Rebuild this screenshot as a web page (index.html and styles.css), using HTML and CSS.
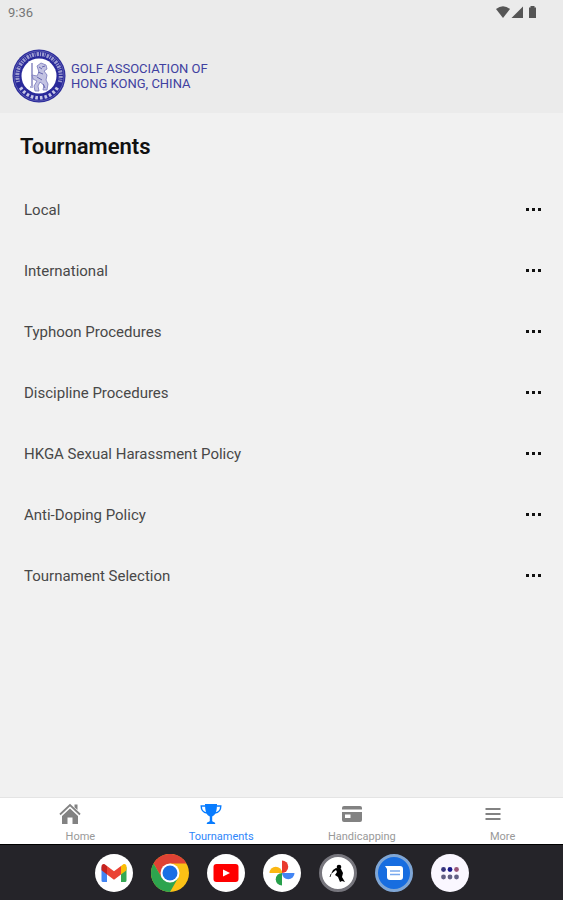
FILE: index.html
```html
<!DOCTYPE html>
<html lang="en">
<head>
<meta charset="utf-8">
<meta name="viewport" content="width=device-width, initial-scale=1">
<title>Tournaments</title>
<link rel="stylesheet" href="styles.css">
</head>
<body>
<header class="top">
  <div class="status">
    <time>9:36</time>
    <svg width="44" height="14" viewBox="0 0 44 14" fill="#555" aria-hidden="true">
      <path d="M1 4Q8-1.500 15 4L8 13Z"/>
      <path d="M28 1.500V13H16.500Z"/>
      <path d="M34 2.500h1.500V1h4v1.500H41V13h-7Z"/>
    </svg>
  </div>
  <div class="brand">
    <svg width="54" height="54" viewBox="0 0 54 54" fill="none" aria-hidden="true">
      <circle cx="27" cy="27" r="26.500" fill="#29299a"/>
      <circle cx="27" cy="27" r="25" stroke="#7777bd" stroke-width=".6"/>
      <path d="M6.200 33A21.700 21.700 0 1 1 47.800 33" stroke="#9c9cd0" stroke-width="4" stroke-dasharray="1.200 1 2 .8 .8 1.200 2.300 1"/>
      <path d="M8.500 38.500A21.700 21.700 0 0 0 45.500 38.500" stroke="#c5c5e6" stroke-width="3.500" stroke-dasharray="2.600 2"/>
      <circle cx="27" cy="27" r="17.500" fill="#fff"/>
      <path d="M20 14v23M18 38h3" stroke="#6b6bb3" stroke-width="1.200"/>
      <path d="M25 17l4-3 5 2 1 4-3 2 3 4-1 5 2 4-1 6h-4l1-5-4-3-2 4 1 5h-4l-1-5 3-5-4-2-1-4 5 1 2-4z" fill="#c3c3e2" stroke="#7777bb" stroke-width=".8"/>
      <path d="M27 18l3 2M26 23l5 2M25 28l5 3M31 35l2 4M33 17l-3 1" stroke="#6666b0"/>
    </svg>
    <p class="brand-name">GOLF ASSOCIATION OF<br>HONG KONG, CHINA</p>
  </div>
</header>
<main>
  <h1>Tournaments</h1>
  <ul class="list">
    <li><span>Local</span><button aria-label="Local options"><i></i><i></i><i></i></button></li>
    <li><span>International</span><button aria-label="International options"><i></i><i></i><i></i></button></li>
    <li><span>Typhoon Procedures</span><button aria-label="Typhoon Procedures options"><i></i><i></i><i></i></button></li>
    <li><span>Discipline Procedures</span><button aria-label="Discipline Procedures options"><i></i><i></i><i></i></button></li>
    <li><span>HKGA Sexual Harassment Policy</span><button aria-label="HKGA Sexual Harassment Policy options"><i></i><i></i><i></i></button></li>
    <li><span>Anti-Doping Policy</span><button aria-label="Anti-Doping Policy options"><i></i><i></i><i></i></button></li>
    <li><span>Tournament Selection</span><button aria-label="Tournament Selection options"><i></i><i></i><i></i></button></li>
  </ul>
</main>
<nav class="tabs">
  <a href="#home">
    <svg width="22" height="22" viewBox="0 0 22 22" fill="#828282"><path d="M11 5.500L19 13v8h-5.500v-6.500h-5V21H3v-8Z"/><path d="M1 11.500L11 2l10 9.500" fill="none" stroke="#828282" stroke-width="1.800"/><path d="M15.500 1.500h3V7l-3-2.800z"/></svg>
    <span>Home</span>
  </a>
  <a href="#tournaments" class="active" aria-current="page">
    <svg width="22" height="22" viewBox="0 0 22 22" fill="#087cff"><path d="M5 1h12c0 7-1.500 11-4.800 12.500V18c0 1 3 1 3 2.500v.5H6.800v-.5c0-1.500 3-1.500 3-2.500v-4.500C6.500 12 5 8 5 1Z"/><path d="M5.500 3H1.200c0 4 2 6.500 6 7M16.500 3h4.300c0 4-2 6.500-6 7" fill="none" stroke="#087cff" stroke-width="1.400"/></svg>
    <span>Tournaments</span>
  </a>
  <a href="#handicapping">
    <svg width="22" height="22" viewBox="0 0 22 22" fill="#828282"><path d="M3 3h16a2 2 0 0 1 2 2v1.500H1V5a2 2 0 0 1 2-2Z"/><path fill-rule="evenodd" d="M1 9h20v8a2 2 0 0 1-2 2H3a2 2 0 0 1-2-2ZM4 11.500V15h5.500v-3.500Z"/></svg>
    <span>Handicapping</span>
  </a>
  <a href="#more">
    <svg width="22" height="22" viewBox="0 0 22 22" stroke="#828282" stroke-width="1.800"><path d="M3.500 6h15M3.500 11h15M3.500 16h15"/></svg>
    <span>More</span>
  </a>
</nav>
<footer class="dock">
  <button aria-label="Gmail"><svg viewBox="0 0 38 38"><circle cx="19" cy="19" r="19" fill="#fff"/><path d="M6.500 13v13.500a1.500 1.500 0 0 0 1.500 1.500h4V15.500z" fill="#4285f4"/><path d="M31.500 13v13.500a1.500 1.500 0 0 1-1.500 1.500h-4V15.500z" fill="#34a853"/><path d="M26 12l2-1.500c1.700-1.200 3.500 0 3.500 2v3.800L26 20.500z" fill="#fbbc04"/><path d="M12 12l-2-1.500c-1.700-1.200-3.500 0-3.500 2v3.800l5.500 4.200z" fill="#c5221f"/><path d="M12 12l7 5.300 7-5.300v8.500l-7 5.200-7-5.200z" fill="#ea4335"/></svg></button>
  <button aria-label="Chrome"><svg viewBox="0 0 38 38"><circle cx="19" cy="19" r="19" fill="#fbc116"/><path d="M19 9.500h16.500A19 19 0 0 0 2.550 9.500L10.800 23.800z" fill="#df4234"/><path d="M2.550 9.500A19 19 0 0 0 19 38l8.200-14.200-8.200 4.700-8.200-4.700z" fill="#2da44e"/><circle cx="19" cy="19" r="9.500" fill="#fff"/><circle cx="19" cy="19" r="7.500" fill="#1b6fe4"/></svg></button>
  <button aria-label="YouTube"><svg viewBox="0 0 38 38"><circle cx="19" cy="19" r="19" fill="#fff"/><rect x="6.500" y="10" width="25" height="18" rx="3" fill="#f00"/><path d="M16 15.500v7l7-3.500z" fill="#fff"/></svg></button>
  <button aria-label="Photos"><svg viewBox="0 0 38 38"><circle cx="19" cy="19" r="19" fill="#fff"/><path d="M19 19H6.500a6.250 6.250 0 0 1 12.500 0Z" fill="#fbb712"/><path d="M19 19V6.500a6.250 6.250 0 0 1 0 12.500Z" fill="#e93a2d"/><path d="M19 19h12.500a6.250 6.250 0 0 1-12.500 0Z" fill="#4285f4"/><path d="M19 19v12.500a6.250 6.250 0 0 1 0-12.500Z" fill="#27a04b"/></svg></button>
  <button aria-label="Golf"><svg viewBox="0 0 38 38"><circle cx="19" cy="19" r="17.500" fill="#fff" stroke="#77767d" stroke-width="3"/><circle cx="20" cy="13" r="2.300"/><path d="M17 14l5 1 2 4-1 4 3 5-3-1-2 1-2-5-3-2 2-3-1-2-5 4 2-4z"/><path d="M12 20l-1 3" stroke="#333"/></svg></button>
  <button aria-label="Messages"><svg viewBox="0 0 38 38"><circle cx="19" cy="19" r="17.500" fill="#176de0" stroke="#7fa6d5" stroke-width="3"/><path d="M10 12h15a3 3 0 0 1 3 3v8a3 3 0 0 1-3 3H15a3 3 0 0 1-3-3v-8z" fill="#fff"/><path d="M15 17h10M15 20.500h10" stroke="#78a9ee" stroke-width="1.500"/></svg></button>
  <button aria-label="All apps"><svg viewBox="0 0 38 38"><circle cx="19" cy="19" r="19" fill="#faf7ff"/><g fill="#626084"><circle cx="12.500" cy="15.500" r="2.400" fill="#36347d"/><circle cx="19" cy="15.500" r="2.400" fill="#17178b"/><circle cx="25.500" cy="15.500" r="2.400" fill="#985579"/><circle cx="12.500" cy="23" r="2.400"/><circle cx="19" cy="23" r="2.400"/><circle cx="25.500" cy="23" r="2.400"/></g></svg></button>
</footer>
</body>
</html>
```
FILE: styles.css
```css
* { box-sizing: border-box; }
body {
  margin: 0;
  min-height: 100vh;
  display: flex;
  flex-direction: column;
  background: #f1f1f1;
  color: #484848;
  font-family: Roboto, "Liberation Sans", sans-serif;
}
h1, p, ul { margin: 0; }
button { border: 0; padding: 0; background: none; }
svg { display: block; flex: none; }

.top {
  padding: 0 24px 10px 8px;
  background: #ebebeb;
}
.status {
  display: flex;
  justify-content: space-between;
  align-items: center;
  height: 24px;
  font-size: 13px;
  color: #777;
}
.brand {
  display: flex;
  align-items: center;
  gap: 5px;
  padding: 25px 0 0 4px;
}
.brand-name {
  font-size: 13px;
  line-height: 15px;
  color: #4040a0;
}

main { flex: 1; }
h1 {
  padding: 20px 20px 18px;
  font-size: 22px;
  line-height: 28px;
  font-weight: 600;
  color: #111;
}
.list { padding: 0; list-style: none; }
.list li {
  display: flex;
  align-items: center;
  justify-content: space-between;
  height: 61px;
  padding: 0 22px 0 24px;
  font-size: 15px;
}
.list button {
  display: flex;
  align-items: center;
  gap: 3px;
  height: 33px;
}
.list i {
  width: 3px;
  height: 3px;
  background: #111;
}

.tabs {
  display: grid;
  grid-template-columns: repeat(4, 1fr);
  background: #fff;
  border-top: 1px solid #e4e4e4;
}
.tabs a {
  display: flex;
  flex-direction: column;
  align-items: center;
  gap: 5px;
  padding-top: 5px;
  font-size: 11px;
  line-height: 14px;
  color: #999;
  text-decoration: none;
}
.tabs span { padding-left: 20px; }
.tabs .active { color: #2f86fa; }

.dock {
  display: flex;
  justify-content: center;
  align-items: center;
  gap: 18px;
  height: 56px;
  background: #252429;
  border-top: 1px solid #000;
}
.dock button, .dock svg { width: 38px; height: 38px; }
```
